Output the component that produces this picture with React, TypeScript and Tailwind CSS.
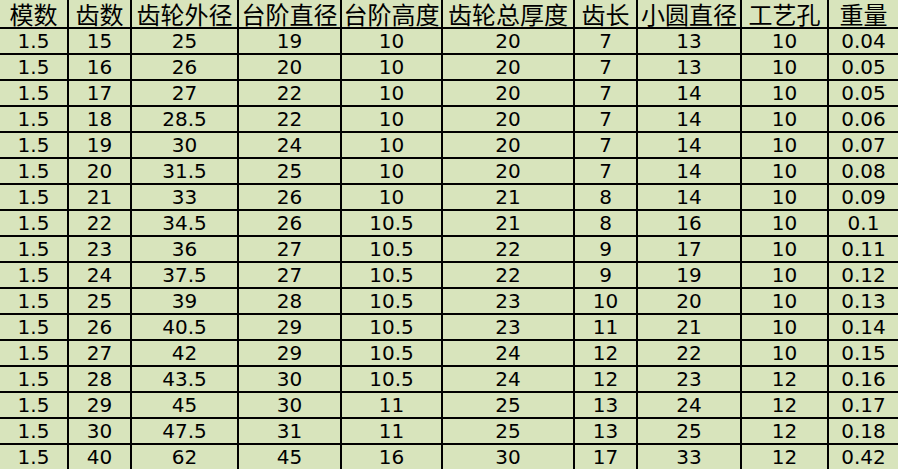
import React from "react";

const headers = ["模数", "齿数", "齿轮外径", "台阶直径", "台阶高度", "齿轮总厚度", "齿长", "小圆直径", "工艺孔", "重量"];

const rows: string[][] = [
  ["1.5", "15", "25", "19", "10", "20", "7", "13", "10", "0.04"],
  ["1.5", "16", "26", "20", "10", "20", "7", "13", "10", "0.05"],
  ["1.5", "17", "27", "22", "10", "20", "7", "14", "10", "0.05"],
  ["1.5", "18", "28.5", "22", "10", "20", "7", "14", "10", "0.06"],
  ["1.5", "19", "30", "24", "10", "20", "7", "14", "10", "0.07"],
  ["1.5", "20", "31.5", "25", "10", "20", "7", "14", "10", "0.08"],
  ["1.5", "21", "33", "26", "10", "21", "8", "14", "10", "0.09"],
  ["1.5", "22", "34.5", "26", "10.5", "21", "8", "16", "10", "0.1"],
  ["1.5", "23", "36", "27", "10.5", "22", "9", "17", "10", "0.11"],
  ["1.5", "24", "37.5", "27", "10.5", "22", "9", "19", "10", "0.12"],
  ["1.5", "25", "39", "28", "10.5", "23", "10", "20", "10", "0.13"],
  ["1.5", "26", "40.5", "29", "10.5", "23", "11", "21", "10", "0.14"],
  ["1.5", "27", "42", "29", "10.5", "24", "12", "22", "10", "0.15"],
  ["1.5", "28", "43.5", "30", "10.5", "24", "12", "23", "12", "0.16"],
  ["1.5", "29", "45", "30", "11", "25", "13", "24", "12", "0.17"],
  ["1.5", "30", "47.5", "31", "11", "25", "13", "25", "12", "0.18"],
  ["1.5", "40", "62", "45", "16", "30", "17", "33", "12", "0.42"],
];

export default function App() {
  return (
    <div className="w-[898px] h-[469px] overflow-hidden bg-[#d8e4bc] text-black">
      <div className="grid grid-cols-[69px_63px_107px_103px_101px_132px_63px_104px_87px_69px]">
        {headers.map((h, i) => (
          <div
            key={"h" + i}
            className={
              "h-[29px] border-b-2 border-black flex items-center justify-center whitespace-nowrap text-[24px] leading-[27px] font-['Noto_Sans_CJK_SC',sans-serif] " +
              (i < headers.length - 1 ? "border-r-2" : "")
            }
          >
            {h}
          </div>
        ))}
        {rows.map((r, ri) =>
          r.map((c, ci) => (
            <div
              key={ri + "-" + ci}
              className={
                "h-[26px] border-b-2 border-black flex items-center justify-center text-[20px] leading-[24px] font-['DejaVu_Sans',sans-serif] " +
                (ci < r.length - 1 ? "border-r-2" : "")
              }
            >
              {c}
            </div>
          ))
        )}
      </div>
    </div>
  );
}
